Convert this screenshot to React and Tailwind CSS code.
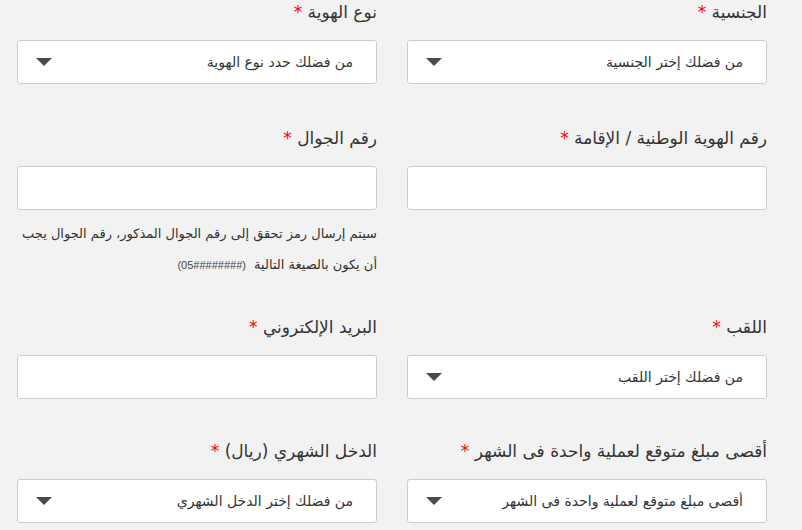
function Label({ children }) {
    return (
        <label className="block text-[17px] leading-[24px] text-[#333] mb-[16px] whitespace-nowrap">
            {children} <span className="text-[#ff0000]">*</span>
        </label>
    );
}

function SelectBox({ placeholder }) {
    return (
        <div className="h-[44px] bg-white border border-[#cccccc] rounded-[3px] flex items-center justify-between pr-[23px] pl-[18px]">
            <span className="text-[14px] text-[#333]">{placeholder}</span>
            <span className="w-0 h-0 border-l-[8px] border-r-[8px] border-t-[8px] border-l-transparent border-r-transparent border-t-[#4a4a4a]" />
        </div>
    );
}

function TextBox() {
    return <div className="h-[44px] bg-white border border-[#cccccc] rounded-[3px]" />;
}

function Field({ label, children }) {
    return (
        <div className="flex flex-col">
            <Label>{label}</Label>
            {children}
        </div>
    );
}

export default function App() {
    return (
        <div
            dir="rtl"
            className="min-h-screen bg-[#f2f2f2] pr-[35px] pl-[17px] font-['DejaVu_Sans',sans-serif]"
        >
            {/* Row 1 */}
            <div className="grid grid-cols-2 gap-x-[30px] mb-[42px]">
                <Field label="الجنسية">
                    <SelectBox placeholder="من فضلك إختر الجنسية" />
                </Field>
                <Field label="نوع الهوية">
                    <SelectBox placeholder="من فضلك حدد نوع الهوية" />
                </Field>
            </div>

            {/* Row 2 */}
            <div className="grid grid-cols-2 gap-x-[30px] mb-[34px]">
                <Field label="رقم الهوية الوطنية / الإقامة">
                    <TextBox />
                </Field>
                <Field label="رقم الجوال">
                    <TextBox />
                    <p className="mt-[8px] text-[13px] leading-[31px] text-[#333]">
                        سيتم إرسال رمز تحقق إلى رقم الجوال المذكور، رقم الجوال يجب
                        <br />
                        أن يكون بالصيغة التالية{" "}
                        <span dir="ltr" className="text-[11px] text-[#444] font-['Liberation_Sans',sans-serif] mr-[4px]">
                            (05########)
                        </span>
                    </p>
                </Field>
            </div>

            {/* Row 3 */}
            <div className="grid grid-cols-2 gap-x-[30px] mb-[40px]">
                <Field label="اللقب">
                    <SelectBox placeholder="من فضلك إختر اللقب" />
                </Field>
                <Field label="البريد الإلكتروني">
                    <TextBox />
                </Field>
            </div>

            {/* Row 4 */}
            <div className="grid grid-cols-2 gap-x-[30px]">
                <Field label="أقصى مبلغ متوقع لعملية واحدة فى الشهر">
                    <SelectBox placeholder="أقصى مبلغ متوقع لعملية واحدة فى الشهر" />
                </Field>
                <Field label="الدخل الشهري (ريال)">
                    <SelectBox placeholder="من فضلك إختر الدخل الشهري" />
                </Field>
            </div>
        </div>
    );
}
